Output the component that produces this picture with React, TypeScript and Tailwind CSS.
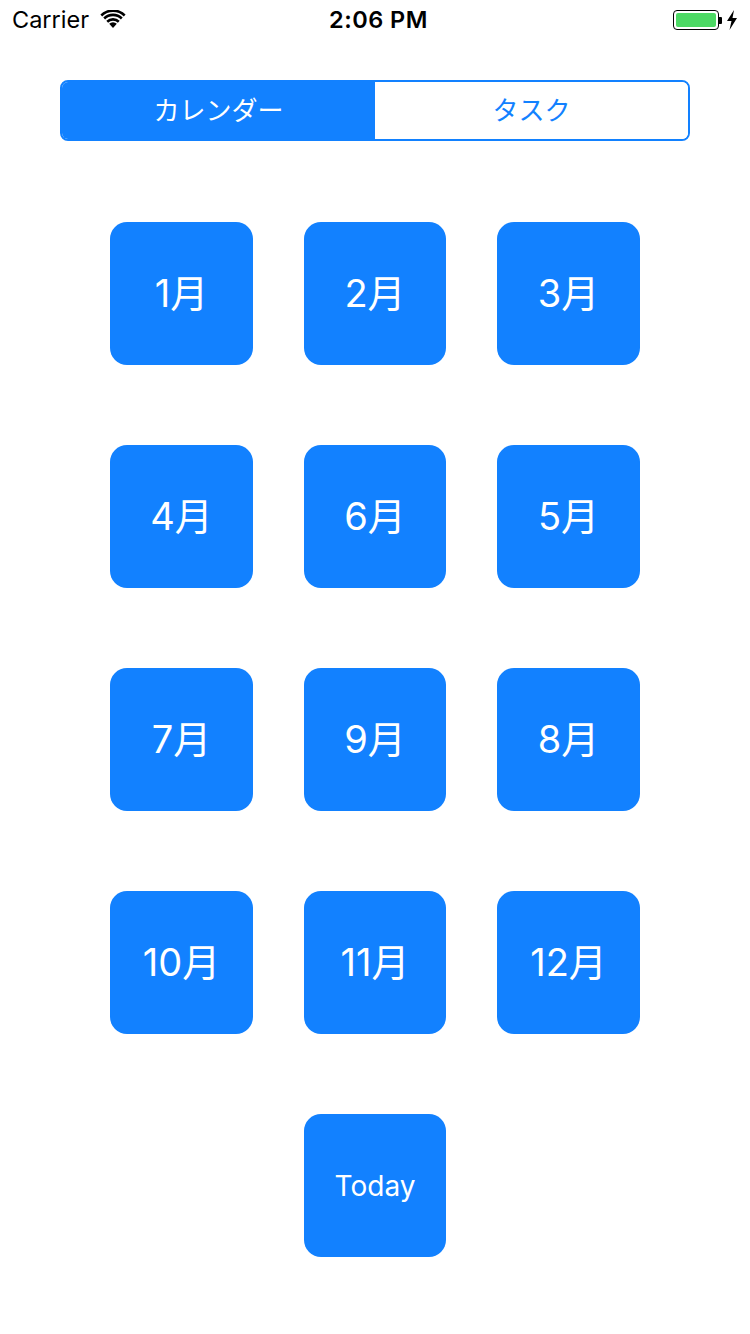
const months = ["1月", "2月", "3月", "4月", "6月", "5月", "7月", "9月", "8月", "10月", "11月", "12月"];

const font = { fontFamily: "Inter, 'Noto Sans CJK JP', sans-serif" };

const StatusBar = () => (
  <div className="h-[40px] flex items-center justify-between px-[12px] relative text-black">
    <div className="flex items-center gap-[11px]">
      <span className="text-[23.5px] leading-none">Carrier</span>
      <svg width="26" height="20" viewBox="0 0 26 20">
        <path d="M13 18 L9.2 13.8 A5.4 5.4 0 0 1 16.8 13.8 Z" fill="#000" />
        <path d="M6.3 10.8 A9.6 9.6 0 0 1 19.7 10.8 L17.9 12.7 A7 7 0 0 0 8.1 12.7 Z" fill="#000" />
        <path d="M3.3 7.6 A13.8 13.8 0 0 1 22.7 7.6 L20.9 9.5 A11.2 11.2 0 0 0 5.1 9.5 Z" fill="#000" />
        <path d="M0.4 4.5 A18 18 0 0 1 25.6 4.5 L23.8 6.4 A15.4 15.4 0 0 0 2.2 6.4 Z" fill="#000" />
      </svg>
    </div>
    <span className="absolute left-[329px] text-[23.5px] font-semibold leading-none tracking-[0.5px]">2:06 PM</span>
    <div className="flex items-center gap-[4px]">
      <div className="flex items-center">
        <div className="w-[46px] h-[20px] rounded-[4px] border border-black p-[2px]">
          <div className="w-full h-full rounded-[2px] bg-[#4cd964]" />
        </div>
        <div className="w-[3px] h-[7px] bg-black rounded-r-[1px]" />
      </div>
      <svg width="12" height="20" viewBox="0 0 12 20">
        <path d="M8 0 L1 11 H5.5 L3.5 20 L11 8 H6.5 Z" fill="#000" />
      </svg>
    </div>
  </div>
);

const App = () => {
  return (
    <div className="w-[750px] h-[1334px] bg-white" style={font}>
      <StatusBar />
      <div className="mx-[60px] mt-[40px] h-[61px] flex rounded-[8px] border-2 border-[#1281ff] overflow-hidden">
        <div className="flex-1 bg-[#1281ff] text-white flex items-center justify-center text-[26px]">
          カレンダー
        </div>
        <div className="flex-1 bg-white text-[#1281ff] flex items-center justify-center text-[26px]">
          タスク
        </div>
      </div>
      <div className="mt-[81px] grid grid-cols-[143px_142px_143px] gap-x-[51px] gap-y-[80px] justify-center">
        {months.map((m) => (
          <div
            key={m}
            className="h-[143px] rounded-[17px] bg-[#1281ff] text-white flex items-center justify-center text-[38px]"
          >
            {m}
          </div>
        ))}
        <div />
        <div className="h-[143px] rounded-[17px] bg-[#1281ff] text-white flex items-center justify-center text-[28px]">
          Today
        </div>
      </div>
    </div>
  );
};

export default App;
